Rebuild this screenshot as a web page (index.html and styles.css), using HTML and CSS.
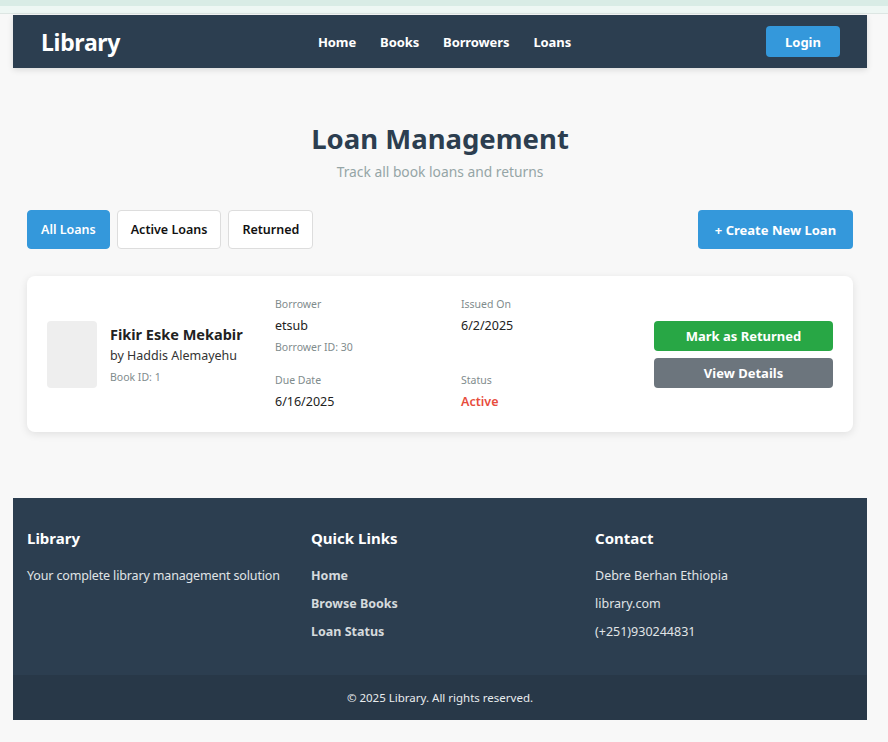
FILE: index.html
```html
<!DOCTYPE html>
<html lang="en">
<head>
<meta charset="utf-8">
<title>Loan Management</title>
<link rel="stylesheet" href="styles.css">
</head>
<body>
<div class="topstrip"></div>
<div class="frame">
  <header class="navbar">
    <div class="logo">Library</div>
    <nav class="nav-links">
      <a href="#">Home</a>
      <a href="#">Books</a>
      <a href="#">Borrowers</a>
      <a href="#">Loans</a>
    </nav>
    <button class="btn btn-blue login">Login</button>
  </header>

  <main class="main">
    <section class="page-head">
      <h1>Loan Management</h1>
      <p>Track all book loans and returns</p>
    </section>

    <div class="toolbar">
      <div class="tabs">
        <button class="tab active">All Loans</button>
        <button class="tab">Active Loans</button>
        <button class="tab">Returned</button>
      </div>
      <button class="btn btn-blue create">+ Create New Loan</button>
    </div>

    <article class="loan-card">
      <div class="book">
        <div class="cover"></div>
        <div class="book-info">
          <div class="book-title">Fikir Eske Mekabir</div>
          <div class="book-author">by Haddis Alemayehu</div>
          <div class="small">Book ID: 1</div>
        </div>
      </div>
      <div class="details">
        <div class="field">
          <div class="label">Borrower</div>
          <div class="value">etsub</div>
          <div class="small">Borrower ID: 30</div>
        </div>
        <div class="field">
          <div class="label">Issued On</div>
          <div class="value">6/2/2025</div>
        </div>
        <div class="field">
          <div class="label">Due Date</div>
          <div class="value">6/16/2025</div>
        </div>
        <div class="field">
          <div class="label">Status</div>
          <div class="value status">Active</div>
        </div>
      </div>
      <div class="actions">
        <button class="btn btn-green">Mark as Returned</button>
        <button class="btn btn-gray">View Details</button>
      </div>
    </article>
  </main>

  <footer class="footer">
    <div class="footer-cols">
      <div class="fcol">
        <h3>Library</h3>
        <p class="nowrap">Your complete library management solution</p>
      </div>
      <div class="fcol">
        <h3>Quick Links</h3>
        <a href="#">Home</a>
        <a href="#">Browse Books</a>
        <a href="#">Loan Status</a>
      </div>
      <div class="fcol">
        <h3>Contact</h3>
        <p>Debre Berhan Ethiopia</p>
        <p>library.com</p>
        <p>(+251)930244831</p>
      </div>
    </div>
    <div class="copyright">© 2025 Library. All rights reserved.</div>
  </footer>
</div>
</body>
</html>
```

FILE: styles.css
```css
* { box-sizing: border-box; }

html, body {
  margin: 0;
  padding: 0;
  background: #f8f8f8;
  font-family: "Noto Sans", "Open Sans", sans-serif;
  color: #222;
}

.topstrip {
  height: 14px;
  background: linear-gradient(to bottom, #d9ece6 0, #d9ece6 6px, #eef7f4 6px, #eef7f4 13px, #dde6e3 13px);
  margin-bottom: 1px;
}

.frame {
  width: 854px;
  margin-left: 13px;
}

.navbar {
  height: 53px;
  background: #2c3e50;
  display: flex;
  align-items: center;
  padding: 0 27px 0 28px;
  box-shadow: 0 2px 6px rgba(0,0,0,0.12);
  position: relative;
}

.logo {
  color: #fff;
  font-weight: 700;
  font-size: 23px;
  width: 277px;
  letter-spacing: -0.3px;
}

.nav-links {
  display: flex;
  gap: 24px;
  flex: 1;
}

.nav-links a {
  color: #fff;
  text-decoration: none;
  font-weight: 700;
  font-size: 13px;
  letter-spacing: -0.1px;
}

button {
  font-family: inherit;
  cursor: pointer;
}

.btn {
  border: none;
  border-radius: 4px;
  color: #fff;
  font-weight: 700;
  font-size: 13px;
}

.btn-blue { background: #3498db; }
.btn-green { background: #28a745; }
.btn-gray { background: #6c757d; }

.login {
  width: 74px;
  height: 31px;
}

.main {
  padding: 0 14px 66px;
}

.page-head {
  text-align: center;
  padding-top: 51px;
}

.page-head h1 {
  margin: 0;
  font-size: 27.5px;
  font-weight: 700;
  color: #2c3e50;
  line-height: 40px;
}

.page-head p {
  margin: 3px 0 0;
  font-size: 13.8px;
  color: #95a5a6;
  line-height: 20px;
}

.toolbar {
  margin-top: 28px;
  display: flex;
  justify-content: space-between;
  align-items: center;
}

.tabs {
  display: flex;
  gap: 7px;
}

.tab {
  height: 39px;
  padding: 0 13px;
  background: #fff;
  border: 1px solid #ddd;
  border-radius: 4px;
  font-size: 12.5px;
  font-weight: 600;
  color: #111;
}

.tab.active {
  background: #3498db;
  border-color: #3498db;
  color: #fff;
}

.create {
  height: 39px;
  width: 155px;
}

.loan-card {
  margin-top: 27px;
  background: #fff;
  border-radius: 8px;
  box-shadow: 0 2px 8px rgba(0,0,0,0.1);
  height: 156px;
  display: flex;
  align-items: center;
  padding: 0 20px;
}

.book {
  display: flex;
  align-items: center;
  gap: 13px;
  width: 228px;
}

.cover {
  width: 50px;
  height: 67px;
  background: #eee;
  border-radius: 4px;
  flex-shrink: 0;
}

.book-title {
  font-weight: 700;
  font-size: 14.5px;
  color: #222;
  line-height: 20px;
}

.book-author {
  font-size: 12.5px;
  color: #333;
  margin-top: 3px;
  line-height: 18px;
}

.small {
  font-size: 10.5px;
  color: #7f8c8d;
  line-height: 15px;
  margin-top: 5px;
}

.details {
  display: grid;
  grid-template-columns: 186px 186px;
  row-gap: 18px;
  align-self: center;
}

.label {
  font-size: 10.5px;
  color: #7f8c8d;
  line-height: 15px;
}

.value {
  font-size: 12.5px;
  color: #222;
  line-height: 18px;
  margin-top: 5px;
}

.value.status {
  color: #e74c3c;
  font-weight: 600;
}

.actions {
  margin-left: auto;
  display: flex;
  flex-direction: column;
  gap: 7px;
  width: 179px;
}

.actions .btn {
  height: 30px;
}

.footer {
  background: #2c3e50;
  color: #fff;
}

.footer-cols {
  display: grid;
  grid-template-columns: repeat(3, 1fr);
  column-gap: 26px;
  padding: 30px 14px 25px;
}

.fcol h3 {
  margin: 0 0 18px;
  font-size: 15px;
  font-weight: 700;
  line-height: 20px;
}

.fcol p, .fcol a {
  display: block;
  margin: 0 0 9px;
  font-size: 12.5px;
  line-height: 19px;
  color: #e0e4e6;
  text-decoration: none;
}

.fcol p.nowrap {
  white-space: nowrap;
  letter-spacing: -0.15px;
}

.fcol a {
  font-weight: 700;
  color: #d5dadd;
}

.copyright {
  background: #283848;
  height: 45px;
  display: flex;
  align-items: center;
  justify-content: center;
  font-size: 11.5px;
  color: #e8ecee;
}
```
